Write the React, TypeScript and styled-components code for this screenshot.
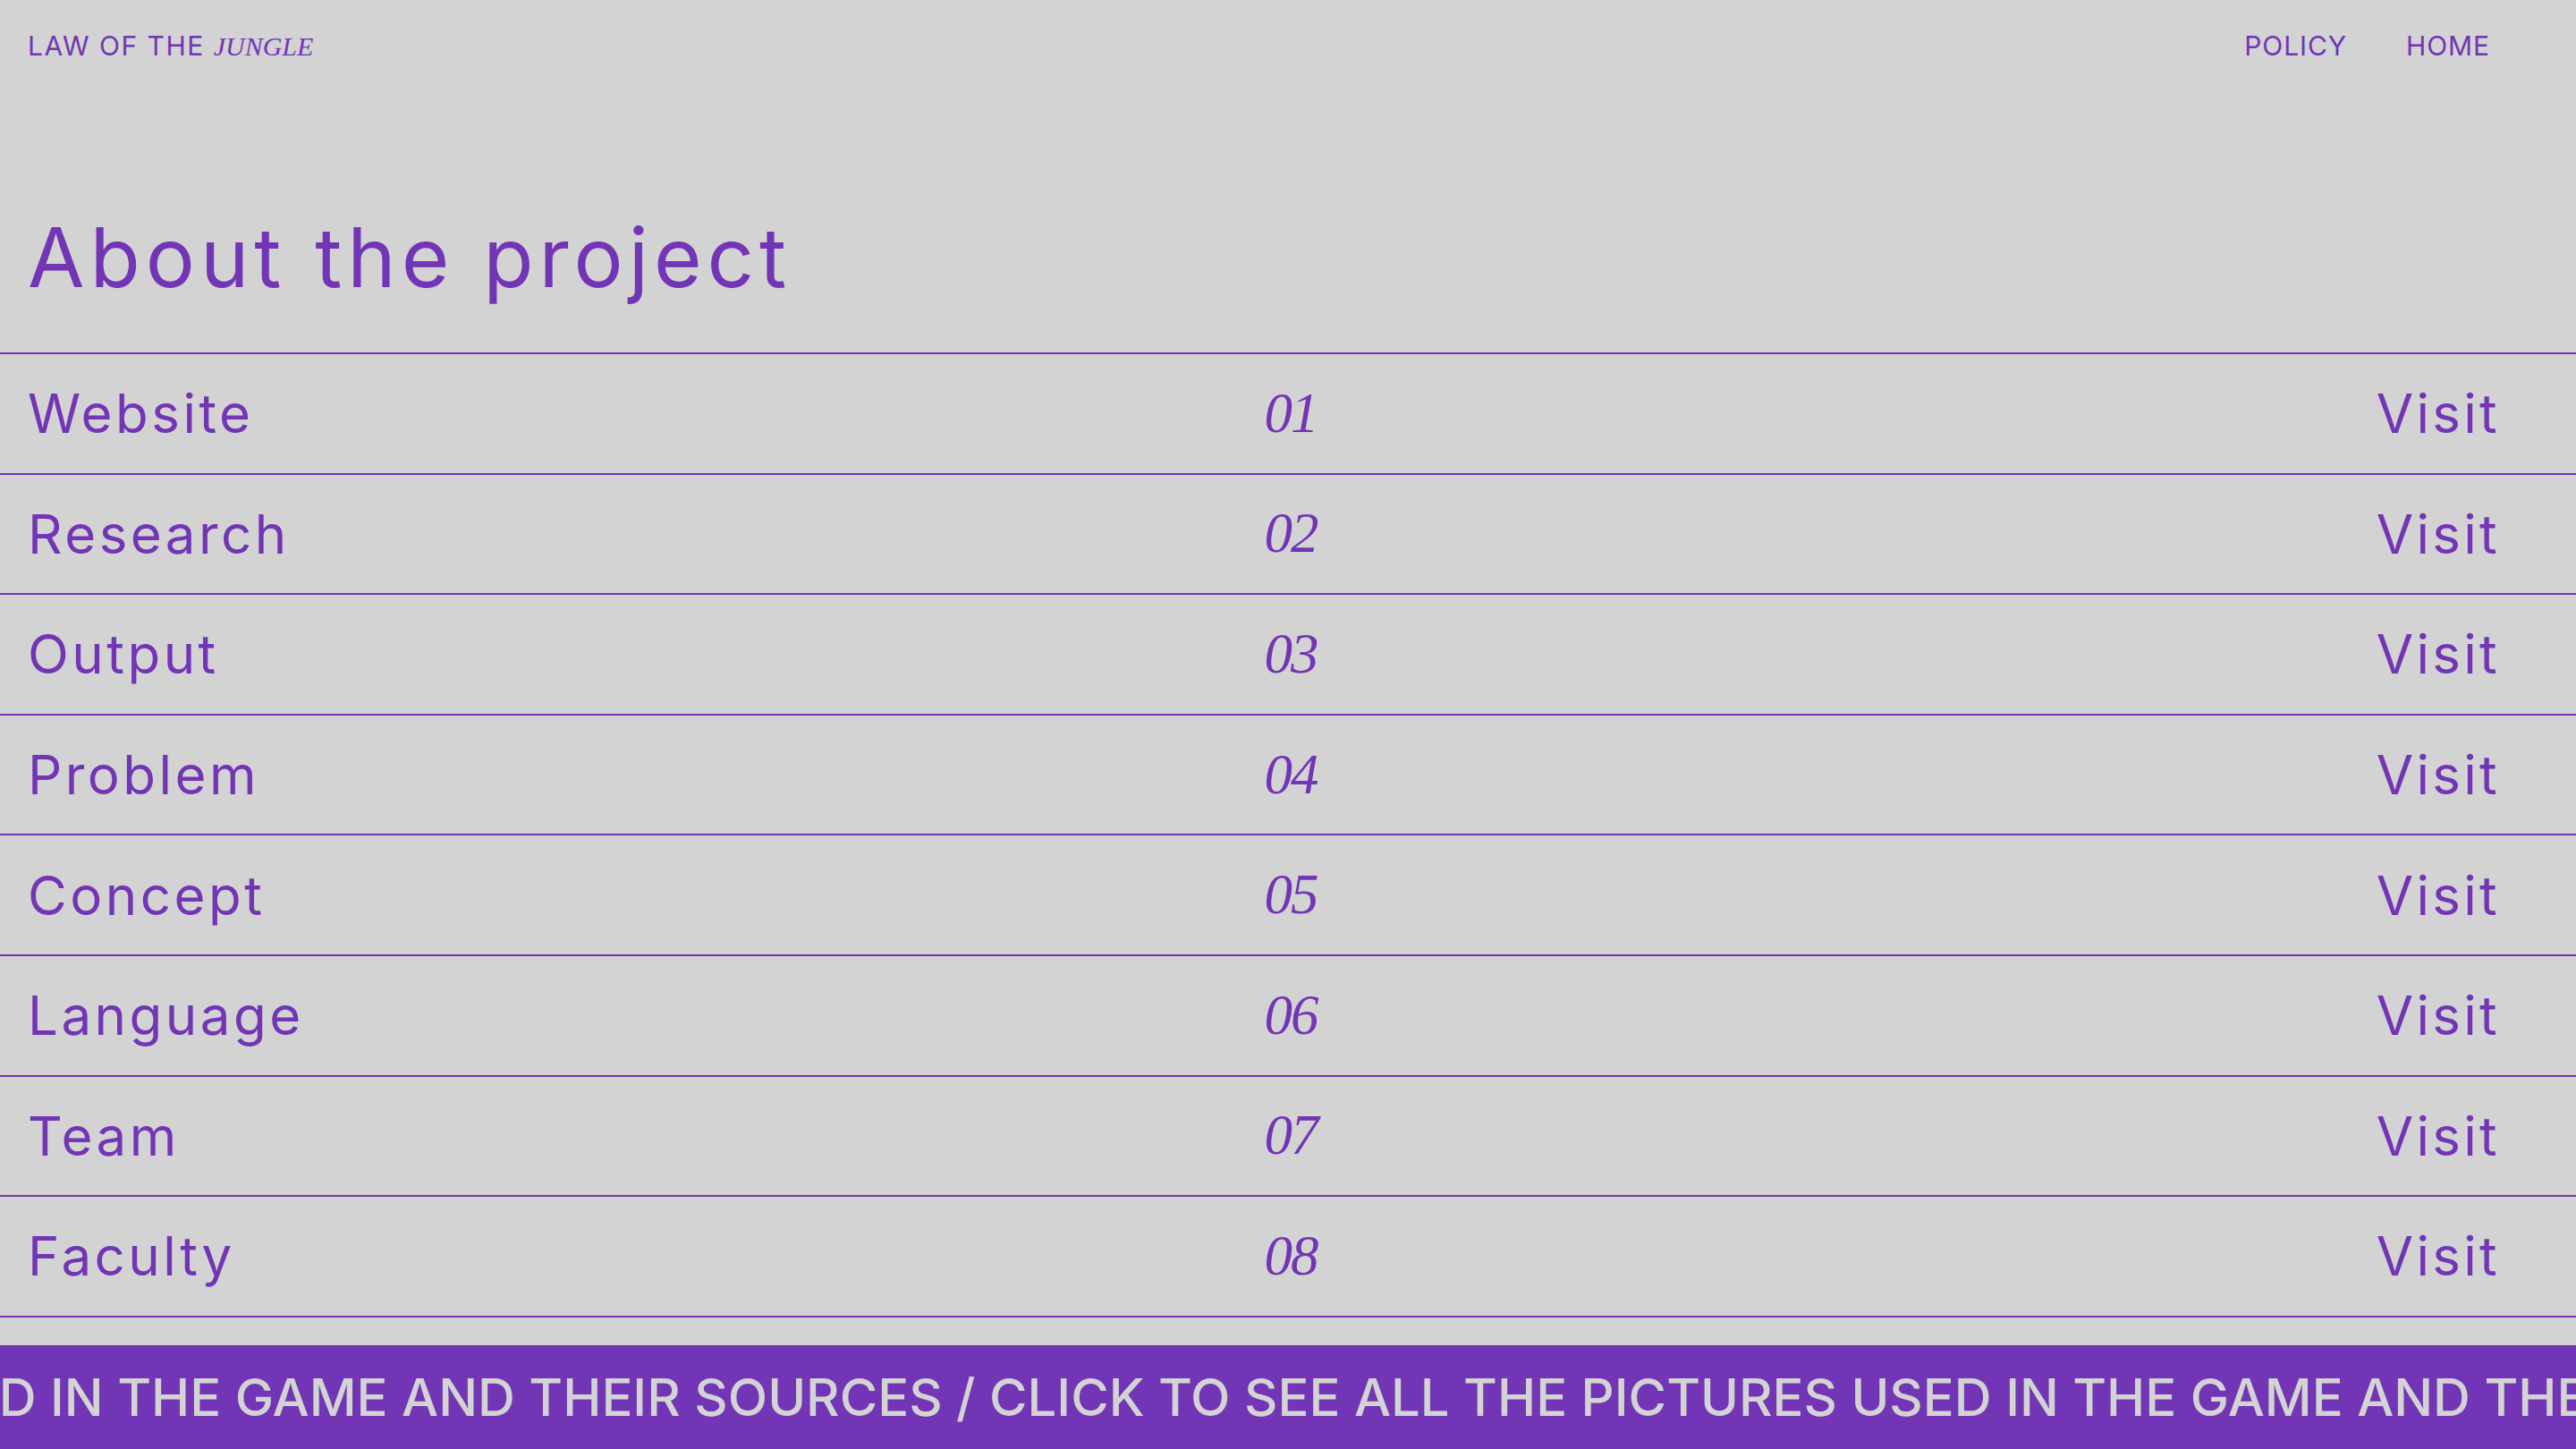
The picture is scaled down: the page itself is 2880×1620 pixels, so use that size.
import React from "react";
import styled, { createGlobalStyle } from "styled-components";

const PURPLE = "#7235b5";
const GREY = "#d3d3d3";

const Global = createGlobalStyle`
  html, body {
    margin: 0;
    padding: 0;
    background: ${GREY};
  }
  body {
    font-family: Inter, "Noto Sans", sans-serif;
    color: ${PURPLE};
    overflow: hidden;
  }
  * { box-sizing: border-box; }
`;

const Page = styled.div`
  display: flex;
  flex-direction: column;
  min-height: 1620px;
`;

const Header = styled.header`
  height: 102px;
  display: flex;
  align-items: center;
  justify-content: space-between;
  padding: 0 96px 0 31px;
`;

const Logo = styled.a`
  font-size: 30px;
  letter-spacing: 0.05em;
  text-transform: uppercase;
  color: ${PURPLE};
  text-decoration: none;
`;

const LogoItalic = styled.em`
  font-family: "Liberation Serif", "Times New Roman", serif;
  font-style: italic;
  font-size: 30px;
  letter-spacing: 0;
`;

const Nav = styled.nav`
  display: flex;
  gap: 66px;
`;

const NavLink = styled.a`
  font-size: 30px;
  letter-spacing: 0.03em;
  text-transform: uppercase;
  color: ${PURPLE};
  text-decoration: none;
`;

const Title = styled.h1`
  margin: 0;
  padding: 140px 31px 60px;
  font-weight: 400;
  font-size: 92px;
  line-height: 92px;
  letter-spacing: 0.065em;
  border-bottom: 2px solid ${PURPLE};
`;

const List = styled.ul`
  list-style: none;
  margin: 0;
  padding: 0;
`;

const Row = styled.li`
  height: 134.6px;
  display: grid;
  grid-template-columns: 1fr auto 1fr;
  align-items: center;
  border-bottom: 2px solid ${PURPLE};
`;

const Name = styled.span`
  padding-left: 31px;
  font-size: 60px;
  letter-spacing: 0.058em;
`;

const Num = styled.span`
  font-family: "Liberation Serif", "Times New Roman", serif;
  font-style: italic;
  font-size: 63px;
  letter-spacing: -2px;
  text-align: center;
  padding-left: 6px;
`;

const Visit = styled.a`
  justify-self: end;
  padding-right: 85px;
  font-size: 60px;
  letter-spacing: 0.055em;
  color: ${PURPLE};
  text-decoration: none;
`;

const Banner = styled.footer`
  margin-top: 31px;
  height: 116px;
  background: ${PURPLE};
  color: ${GREY};
  display: grid;
  grid-template-columns: 1106px 1fr;
  align-items: center;
  overflow: hidden;
  font-size: 58px;
  font-weight: 500;
  letter-spacing: 0;
  text-transform: uppercase;
  white-space: nowrap;
`;

const BannerTail = styled.div`
  display: flex;
  justify-content: flex-end;
  overflow: hidden;
`;

const BannerHead = styled.div`
  overflow: hidden;
`;

const MARQUEE = "Click to see all the pictures used in the game and their sources /";

const items = [
  "Website",
  "Research",
  "Output",
  "Problem",
  "Concept",
  "Language",
  "Team",
  "Faculty",
];

export default function App() {
  return (
    <>
      <Global />
      <Page>
        <Header>
          <Logo href="#">
            Law of the <LogoItalic>Jungle</LogoItalic>
          </Logo>
          <Nav>
            <NavLink href="#">Policy</NavLink>
            <NavLink href="#">Home</NavLink>
          </Nav>
        </Header>
        <Title>About the project</Title>
        <List>
          {items.map((name, i) => (
            <Row key={name}>
              <Name>{name}</Name>
              <Num>{String(i + 1).padStart(2, "0")}</Num>
              <Visit href="#">Visit</Visit>
            </Row>
          ))}
        </List>
        <Banner>
          <BannerTail>
            <span>{MARQUEE}&nbsp;</span>
          </BannerTail>
          <BannerHead>
            <span>
              {MARQUEE} {MARQUEE}
            </span>
          </BannerHead>
        </Banner>
      </Page>
    </>
  );
}
